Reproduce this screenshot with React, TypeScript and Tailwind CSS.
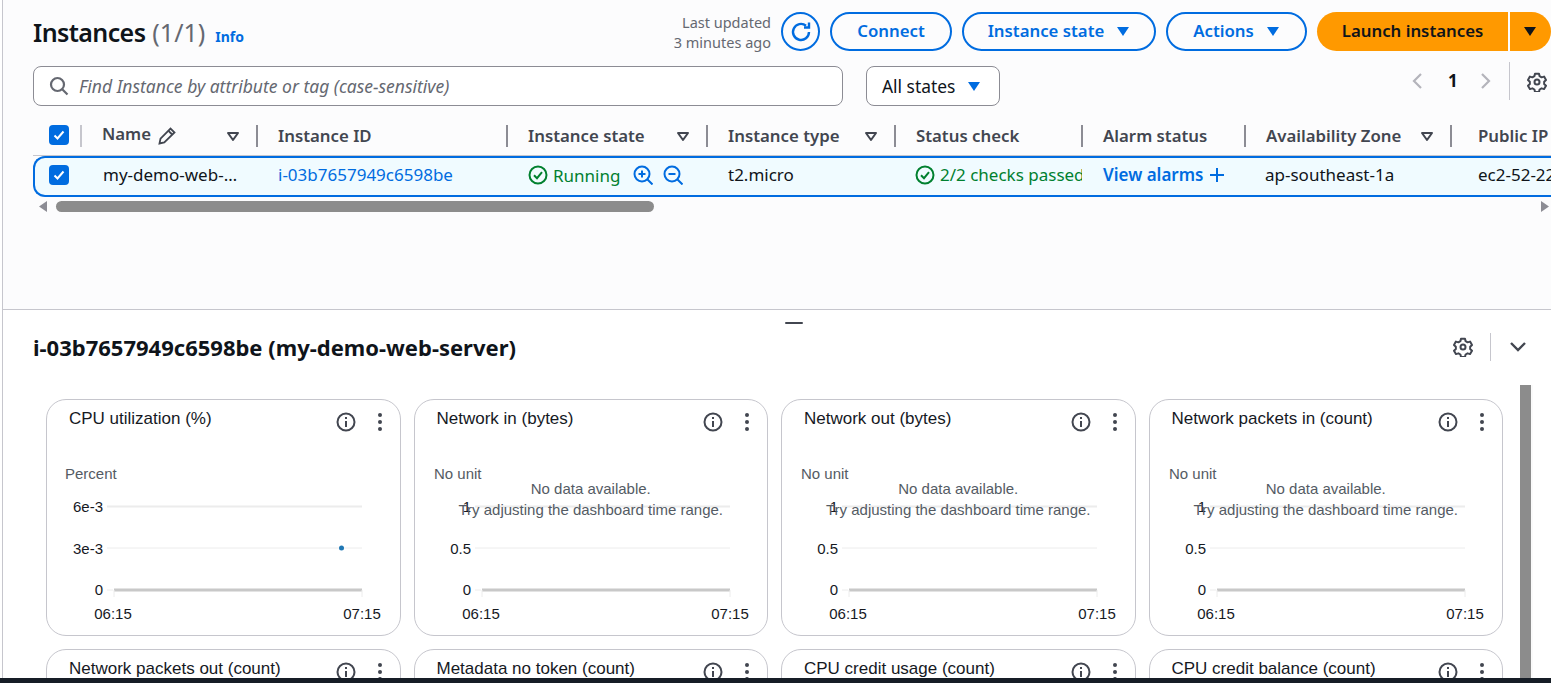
import type { ReactNode } from 'react';

const columns = [
  { label: 'Name', width: 176, filter: true, edit: true },
  { label: 'Instance ID', width: 250 },
  { label: 'Instance state', width: 200, filter: true },
  { label: 'Instance type', width: 188, filter: true },
  { label: 'Status check', width: 187 },
  { label: 'Alarm status', width: 163 },
  { label: 'Availability Zone', width: 206, filter: true },
  { label: 'Public IP', width: 200 },
];

const charts = [
  { title: 'CPU utilization (%)', unit: 'Percent', ticks: ['6e-3', '3e-3', '0'], point: true },
  { title: 'Network in (bytes)', unit: 'No unit', ticks: ['1', '0.5', '0'] },
  { title: 'Network out (bytes)', unit: 'No unit', ticks: ['1', '0.5', '0'] },
  { title: 'Network packets in (count)', unit: 'No unit', ticks: ['1', '0.5', '0'] },
];

const lowerCharts = [
  'Network packets out (count)',
  'Metadata no token (count)',
  'CPU credit usage (count)',
  'CPU credit balance (count)',
];

const Caret = ({ className = '' }: { className?: string }) => (
  <svg width="14" height="11" viewBox="0 0 14 11" className={className}>
    <path d="M1 1h12L7 10z" fill="currentColor" />
  </svg>
);

const FilterCaret = () => (
  <svg width="14" height="11" viewBox="0 0 14 11" className="text-[#424650]">
    <path d="M2 2h10L7 9z" fill="none" stroke="currentColor" strokeWidth="2" strokeLinejoin="round" />
  </svg>
);

const Gear = ({ className = '' }: { className?: string }) => (
  <svg width="20" height="20" viewBox="0 0 24 24" fill="none" stroke="currentColor" strokeWidth="2.4" strokeLinejoin="round" className={className}>
    <path d="M9.6 2.5h4.8l.7 3 2.4 1.4 3-.9 2.3 4-2.2 2.1v2.8l2.2 2.1-2.3 4-3-.9-2.4 1.4-.7 3H9.6l-.7-3-2.4-1.4-3 .9-2.3-4 2.2-2.1v-2.8L1.2 10l2.3-4 3 .9 2.4-1.4z" transform="translate(0 -.5)" />
    <circle cx="12" cy="12" r="3" />
  </svg>
);

const CheckCircle = () => (
  <svg width="20" height="20" viewBox="0 0 20 20" fill="none" stroke="currentColor" strokeWidth="2" className="shrink-0 text-[#00802f]">
    <circle cx="10" cy="10" r="8.5" />
    <path d="M6 10.2l3 3 5-6" />
  </svg>
);

const Zoom = ({ plus }: { plus?: boolean }) => (
  <svg width="20" height="20" viewBox="0 0 20 20" fill="none" stroke="currentColor" strokeWidth="2" className="text-[#006ce0]">
    <circle cx="9" cy="9" r="7.5" />
    <path d="M14.5 14.5l5 5M5.5 9h7" />
    {plus && <path d="M9 5.5v7" />}
  </svg>
);

const Checkbox = () => (
  <span className="flex h-5 w-5 items-center justify-center rounded-[4px] bg-[#006ce0]">
    <svg width="14" height="14" viewBox="0 0 14 14" fill="none" stroke="white" strokeWidth="2">
      <path d="M2.5 7.5l3 3 6-7" />
    </svg>
  </span>
);

const OutlineButton = ({ children, width }: { children: ReactNode; width: string }) => (
  <button className={`flex h-[39px] items-center justify-center gap-3 rounded-full border-2 border-[#006ce0] pb-[1px] text-[16.8px] font-semibold text-[#006ce0] ${width}`}>
    {children}
  </button>
);

const CardHeader = ({ title }: { title: string }) => (
  <div className="flex h-[46px] items-start pl-[22px] pr-[12px] pt-[8px]">
    <span className="flex-1 font-['Liberation_Sans',Arial,sans-serif] text-[17px] leading-[22px] text-[#16191f]">{title}</span>
    <svg width="20" height="20" viewBox="0 0 20 20" fill="none" stroke="#424650" strokeWidth="2" className="mr-[22px] mt-[4px]">
      <circle cx="10" cy="10" r="8.5" />
      <path d="M10 9v6M10 5v2" />
    </svg>
    <svg width="4" height="18" viewBox="0 0 4 18" fill="#424650" className="mr-[6px] mt-[5px]">
      <circle cx="2" cy="2" r="2" />
      <circle cx="2" cy="9" r="2" />
      <circle cx="2" cy="16" r="2" />
    </svg>
  </div>
);

const ChartCard = ({ chart }: { chart: (typeof charts)[number] }) => (
  <div className="relative h-[237px] rounded-[20px] border border-[#c6c6cd] bg-white">
    <CardHeader title={chart.title} />
    <svg width="354" height="190" className="block font-['Liberation_Sans',Arial,sans-serif]">
      <text x={chart.point ? 18 : 19} y="33" fontSize="15" fill="#545b64">{chart.unit}</text>
      <line x1="60" x2="315" y1="60.5" y2="60.5" stroke="#ececec" strokeWidth="2" />
      <line x1="60" x2="315" y1="102" y2="102" stroke="#ececec" />
      <line x1="60" x2="66" y1="144" y2="144" stroke="#ececec" />
      <line x1="67" x2="315" y1="144" y2="144" stroke="#c8c8c8" strokeWidth="3" />
      <line x1="67" x2="67" y1="144" y2="151" stroke="#ececec" />
      <line x1="315" x2="315" y1="144" y2="151" stroke="#ececec" />
      {chart.ticks.map((tick, i) => (
        <text key={tick} x="56" y={66 + i * 41.5} fontSize="15" textAnchor="end" fill="#16191f">{tick}</text>
      ))}
      <text x="66" y="173" fontSize="15" textAnchor="middle" fill="#16191f">06:15</text>
      <text x="315" y="173" fontSize="15" textAnchor="middle" fill="#16191f">07:15</text>
      {chart.point && <circle cx="294.5" cy="102" r="2.5" fill="#1f77b4" />}
    </svg>
    {!chart.point && (
      <div className="absolute left-0 top-[78px] w-full text-center font-['Liberation_Sans',Arial,sans-serif] text-[15px] leading-[21px] text-[#545b64]">
        <div>No data available.</div>
        <div>Try adjusting the dashboard time range.</div>
      </div>
    )}
  </div>
);

export default function App() {
  return (
    <div className="flex h-[683px] w-[1551px] flex-col overflow-hidden bg-white font-['Noto_Sans','Open_Sans',sans-serif] text-[#0f141a]">
      <div className="ml-[2px] flex min-h-0 flex-1 flex-col border-l border-[#c6c6cd]">
        {/* Instances list */}
        <section className="h-[310px] shrink-0 overflow-hidden border-b border-[#c6c6cd] bg-[#fcfcfd] pt-[12px]">
          <div className="flex h-[39px] items-center pl-[30px]">
            <h1 className="flex items-baseline pt-[2px] text-[25px] font-semibold leading-[39px] tracking-[-0.6px]">
              Instances <span className="ml-[7px] font-normal tracking-normal text-[#656871]">(1/1)</span>
              <span className="ml-[10px] text-sm font-bold tracking-normal text-[#006ce0]">Info</span>
            </h1>
            <div className="ml-auto mr-[10px] text-right text-[14.5px] leading-[20px] text-[#656871]">
              <div>Last updated</div>
              <div>3 minutes ago</div>
            </div>
            <button className="mr-[10px] flex h-[39px] w-[39px] items-center justify-center rounded-full border-2 border-[#006ce0] text-[#006ce0]">
              <svg width="24" height="24" viewBox="0 0 24 24" fill="none" stroke="currentColor" strokeWidth="2.4">
                <path d="M20 12a8 8 0 1 1-3-6.3" />
                <path d="M20 2.5v5h-5" />
              </svg>
            </button>
            <div className="flex items-center gap-[10px]">
              <OutlineButton width="w-[122px]">Connect</OutlineButton>
              <OutlineButton width="w-[194px]">Instance state <Caret /></OutlineButton>
              <OutlineButton width="w-[141px]">Actions <Caret /></OutlineButton>
              <div className="flex h-[39px] w-[234px] items-center text-[16.8px] font-semibold">
                <button className="h-full w-[191px] rounded-l-full bg-[#ff9900] pb-[1px]">Launch instances</button>
                <button className="ml-[2px] flex h-full w-[41px] items-center justify-center rounded-r-full bg-[#ff9900]">
                  <Caret className="mr-[2px]" />
                </button>
              </div>
            </div>
          </div>

          <div className="mt-[15px] flex h-[40px] pl-[30px]">
            <div className="flex w-[810px] items-center rounded-[8px] border border-[#8c8c94] bg-white pl-[15px]">
              <svg width="20" height="20" viewBox="0 0 20 20" fill="none" stroke="#656871" strokeWidth="2.2">
                <circle cx="8.5" cy="8.5" r="6.5" />
                <path d="M13 13l5.5 5.5" />
              </svg>
              <span className="ml-[10px] text-[17.5px] italic text-[#656871]">Find Instance by attribute or tag (case-sensitive)</span>
            </div>
            <div className="ml-[23px] flex w-[134px] items-center gap-[12px] rounded-[8px] border border-[#8c8c94] bg-white pl-[15px] text-[17.4px]">
              All states <Caret className="text-[#006ce0]" />
            </div>
            <div className="ml-auto flex h-[38px] -translate-y-[4px] items-center text-[#b4b4bb]">
              <svg width="14" height="18" viewBox="0 0 14 18" fill="none" stroke="currentColor" strokeWidth="2.2">
                <path d="M11 2L4 9l7 7" />
              </svg>
              <span className="ml-[24px] w-[9px] text-[17px] font-bold text-[#0f141a]">1</span>
              <svg width="14" height="18" viewBox="0 0 14 18" fill="none" stroke="currentColor" strokeWidth="2.2" className="ml-[22px]">
                <path d="M3 2l7 7-7 7" />
              </svg>
              <div className="ml-[16px] h-full border-l border-[#c6c6cd]" />
              <Gear className="ml-[17px] mr-[4px] mt-[2px] text-[#424650]" />
            </div>
          </div>

          {/* Table */}
          <div className="ml-[30px] mt-[19px] overflow-hidden">
            <div className="flex h-[31px] w-[1600px] items-start border-b border-[#c6c6cd]">
              <div className="flex h-[22px] w-[47px] shrink-0 pl-[16px]">
                <Checkbox />
              </div>
              {columns.map((col, i) => (
                <div
                  key={col.label}
                  style={{ width: col.width }}
                  className={`flex h-[22px] shrink-0 items-center border-l-2 pr-[16px] text-[16.8px] font-semibold text-[#424650] ${i === 0 ? 'border-[#c6c6cd]' : 'border-[#8c8c94]'} ${i === 7 ? 'pl-[26px]' : 'pl-[20px]'}`}
                >
                  <span className={`whitespace-nowrap ${col.edit ? '-translate-y-[2px]' : ''}`}>{col.label}</span>
                  {col.edit && (
                    <svg width="18" height="18" viewBox="0 0 18 18" fill="none" stroke="currentColor" strokeWidth="1.8" className="ml-[7px]">
                      <path d="M1.500 16.500l1-4.800L12.500 1.500l4 4L6.300 15.500z" />
                      <path d="M10.500 3.800l3.700 3.700" />
                    </svg>
                  )}
                  {col.filter && <span className="ml-auto"><FilterCaret /></span>}
                </div>
              ))}
            </div>
            <div className="flex h-[41px] w-[1600px] items-center rounded-l-[12px] border-y-2 border-l-2 border-[#006ce0] bg-[#f0fbff] pb-[3px] text-[17px]">
              <div className="w-[48px] shrink-0 pl-[14px]">
                <Checkbox />
              </div>
              <div className="w-[174px] shrink-0 truncate pl-[20px] pr-[18px]">my-demo-web-server</div>
              <div className="w-[250px] shrink-0 pl-[21px] text-[#006ce0]">i-03b7657949c6598be</div>
              <div className="flex w-[200px] shrink-0 items-center pl-[21px] text-[#00802f]">
                <CheckCircle />
                <span className="ml-[5px] mt-[2px]">Running</span>
                <span className="ml-[13px] flex gap-[10px]"><Zoom plus /><Zoom /></span>
              </div>
              <div className="w-[188px] shrink-0 pl-[21px]">t2.micro</div>
              <div className="flex w-[187px] shrink-0 items-center overflow-hidden whitespace-nowrap pl-[20px] text-[#00802f]">
                <CheckCircle />
                <span className="ml-[5px]">2/2 checks passed</span>
              </div>
              <div className="flex w-[163px] shrink-0 items-center pl-[21px] font-semibold text-[#006ce0]">
                View alarms
                <svg width="16" height="16" viewBox="0 0 16 16" fill="none" stroke="currentColor" strokeWidth="2" className="ml-[6px]">
                  <path d="M8 1v14M1 8h14" />
                </svg>
              </div>
              <div className="w-[206px] shrink-0 pl-[20px]">ap-southeast-1a</div>
              <div className="w-[200px] shrink-0 whitespace-nowrap pl-[27px]">ec2-52-221-18-9</div>
            </div>
          </div>
          <div className="mt-[3px] flex h-[13px] items-center pl-[35px] pr-[1px]">
            <svg width="10" height="13" viewBox="0 0 10 13" fill="#8c8c94"><path d="M9 1v11L1 6.5z" /></svg>
            <div className="ml-[8px] h-[11px] w-[598px] rounded-full bg-[#8c8c8c]" />
            <svg width="10" height="13" viewBox="0 0 10 13" fill="#8c8c94" className="ml-auto"><path d="M1 1v11l8-5.5z" /></svg>
          </div>
        </section>

        {/* Instance details */}
        <section className="flex min-h-0 flex-1 flex-col">
          <div className="mx-auto mt-[12px] h-[2px] w-[18px] translate-x-[17px] rounded bg-[#424650]" />
          <div className="mt-[9px] flex h-[28px] items-center pl-[30px] pr-[24px]">
            <h2 className="text-[22px] font-bold leading-[28px]">i-03b7657949c6598be (my-demo-web-server)</h2>
            <Gear className="ml-auto text-[#424650]" />
            <div className="ml-[17px] h-[28px] border-l border-[#c6c6cd]" />
            <svg width="18" height="12" viewBox="0 0 18 12" fill="none" stroke="#424650" strokeWidth="2.4" className="ml-[18px]">
              <path d="M2 2l7 7 7-7" />
            </svg>
          </div>
          <div className="mt-[24px] flex min-h-0 flex-1">
            <div className="min-h-0 flex-1 overflow-hidden pl-[43px] pr-[17px] pt-[14px]">
              <div className="grid grid-cols-4 gap-[13px]">
                {charts.map((chart) => (
                  <ChartCard key={chart.title} chart={chart} />
                ))}
                {lowerCharts.map((title) => (
                  <div key={title} className="h-[237px] rounded-[20px] border border-[#c6c6cd] bg-white">
                    <CardHeader title={title} />
                  </div>
                ))}
              </div>
            </div>
            <div className="mr-[18px] w-[13px] shrink-0 bg-[#fafafa]">
              <div className="h-full w-[11px] bg-[#8c8c8c]" />
            </div>
          </div>
        </section>
      </div>
      <div className="h-[5px] shrink-0 bg-[#161d26]" />
    </div>
  );
}
